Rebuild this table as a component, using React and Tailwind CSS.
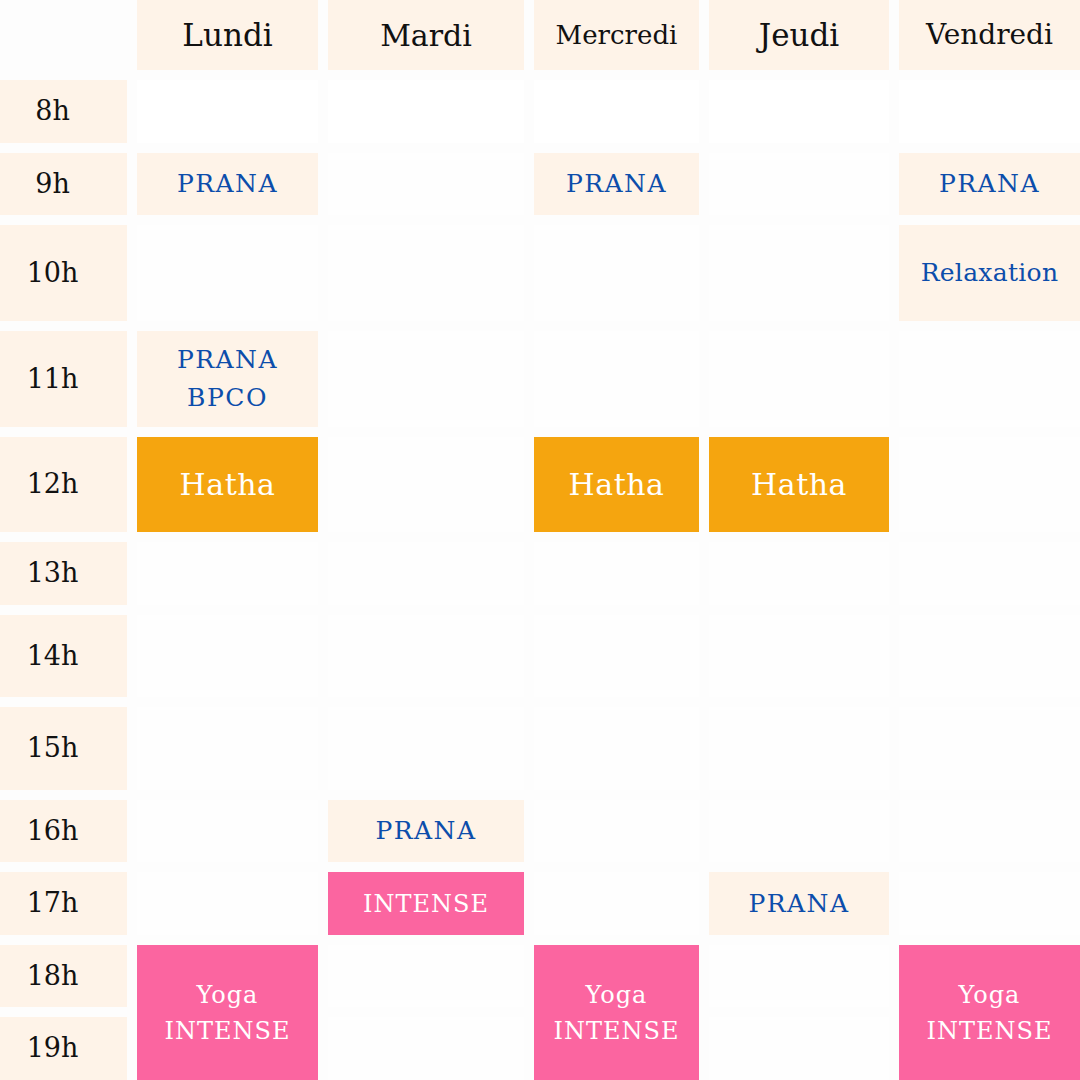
import React from "react";

const days = [
  { name: "Lundi", cls: "text-[31px]" },
  { name: "Mardi", cls: "text-[30px]" },
  { name: "Mercredi", cls: "text-[26px]" },
  { name: "Jeudi", cls: "text-[31px]" },
  { name: "Vendredi", cls: "text-[28px]" },
];

const hours = ["8h", "9h", "10h", "11h", "12h", "13h", "14h", "15h", "16h", "17h", "18h", "19h"];

const P = { t: "cream", lines: ["PRANA"] };
const H = { t: "orange", lines: ["Hatha"] };
const Y = { t: "pink2", lines: ["Yoga", "INTENSE"] };
const E = null;
const W = "white";
const S = "skip";

const grid = [
  [W, W, W, W, W],
  [P, E, P, E, P],
  [E, E, E, E, { t: "cream", lines: ["Relaxation"], small: true }],
  [{ t: "cream", lines: ["PRANA", "BPCO"] }, E, E, E, E],
  [H, E, H, H, E],
  [E, E, E, E, E],
  [E, E, E, E, E],
  [E, E, E, E, E],
  [E, P, E, E, E],
  [E, { t: "pink", lines: ["INTENSE"] }, E, P, E],
  [Y, E, Y, E, Y],
  [S, E, S, E, S],
];

function Cell({ c }) {
  if (c === null) return <div className="bg-[#fefefe]" />;
  if (c === W) return <div className="bg-white" />;
  if (c.t === "cream")
    return (
      <div className="bg-[#fef3e8] flex flex-col items-center justify-center text-[#0c4dab] text-[25px] leading-[38px]">
        {c.lines.map((l) => (
          <span key={l} className={c.small ? "tracking-[0.3px]" : "tracking-[1.5px]"}>{l}</span>
        ))}
      </div>
    );
  if (c.t === "orange")
    return (
      <div className="bg-[#f5a50f] flex items-center justify-center text-white text-[30px] tracking-[0.5px]">
        {c.lines[0]}
      </div>
    );
  if (c.t === "pink")
    return (
      <div className="bg-[#fb65a0] flex items-center justify-center text-white text-[24px] tracking-[1px]">
        {c.lines[0]}
      </div>
    );
  return (
    <div className="row-span-2 bg-[#fb65a0] flex flex-col items-center justify-center text-white text-[24px] tracking-[1px] leading-[36px]">
      {c.lines.map((l) => (
        <span key={l}>{l}</span>
      ))}
    </div>
  );
}

export default function App() {
  return (
    <div className="w-[1080px] h-[1080px] bg-[#fdfdfd] font-['DejaVu_Serif',serif] overflow-hidden">
      <div className="grid grid-cols-[127px_181px_196px_165px_180px_181px] grid-rows-[70px_63px_62px_96px_96px_95px_63px_82px_83px_62px_63px_62px_63px] gap-x-[10px] gap-y-[10px]">
        <div />
        {days.map((d) => (
          <div key={d.name} className={`bg-[#fef3e8] flex items-center justify-center text-[#111] ${d.cls}`}>
            {d.name}
          </div>
        ))}
        {hours.map((h, ri) => (
          <React.Fragment key={h}>
            <div className="bg-[#fef3e8] flex items-center justify-center pr-[22px] text-[#111] text-[27px]">{h}</div>
            {grid[ri].map((c, ci) => (c === S ? null : <Cell key={ci} c={c} />))}
          </React.Fragment>
        ))}
      </div>
    </div>
  );
}
